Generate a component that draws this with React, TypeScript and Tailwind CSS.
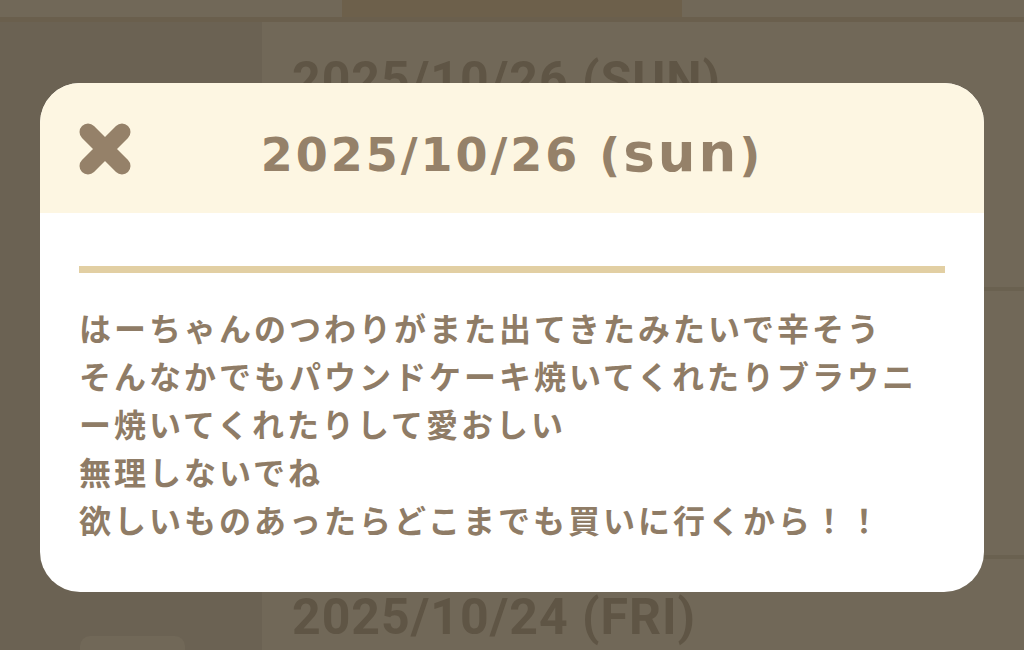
import { useState } from 'react'

const lines = [
  'はーちゃんのつわりがまた出てきたみたいで辛そう',
  'そんなかでもパウンドケーキ焼いてくれたりブラウニ',
  'ー焼いてくれたりして愛おしい',
  '無理しないでね',
  '欲しいものあったらどこまでも買いに行くから！！',
]

function CloseIcon() {
  return (
    <svg width="52" height="52" viewBox="0 0 52 52">
      <path d="M9 9 L43 43 M43 9 L9 43" stroke="#958169" strokeWidth="17" strokeLinecap="round" />
    </svg>
  )
}

export default function App() {
  const [open, setOpen] = useState(true)

  return (
    <div className="relative w-[1024px] h-[650px] overflow-hidden bg-[#716858]">
      {/* dimmed page behind the dialog */}
      <div className="flex h-[17px]">
        <div className="w-[342px] bg-[#716858]" />
        <div className="w-[340px] bg-[#6d604b]" />
        <div className="flex-1 bg-[#716858]" />
      </div>
      <div className="h-[5px] bg-[#6a5f4d]" />
      <div className="flex h-[628px]">
        <div className="w-[262px] bg-[#6b6253] pt-[614px] pl-[80px]">
          <div className="w-[105px] h-[30px] rounded-t-[10px] bg-[#716858]" />
        </div>
        <div className="flex-1 flex flex-col">
          <div className="h-[265px] pl-[30px] pt-[33px] font-['Roboto',sans-serif] font-bold text-[50px] tracking-[1px] text-[#5f5545] leading-none">
            2025/10/26 (SUN)
          </div>
          <div className="h-[268px] border-t-[4px] border-[#6a6150]" />
          <div className="flex-1 border-t-[4px] border-[#6a6150] pl-[30px] pt-[33px] font-['Roboto',sans-serif] font-bold text-[50px] tracking-[1px] text-[#5f5545] leading-none">
            2025/10/24 (FRI)
          </div>
        </div>
      </div>

      {open && (
        <div className="absolute left-[40px] top-[83px] w-[944px] h-[509px] rounded-[40px] overflow-hidden bg-white">
          <div className="relative h-[130px] bg-[#fdf6e2] flex items-center justify-center">
            <button onClick={() => setOpen(false)} className="absolute left-[39px] top-[40px]">
              <CloseIcon />
            </button>
            <h1 className="pt-[8px] font-['DejaVu_Sans',sans-serif] font-bold text-[46px] tracking-[3px] text-[#958169] leading-none">
              2025/10/26 (<span className="text-[53px]">sun</span>)
            </h1>
          </div>
          <div className="px-[39px]">
            <div className="mt-[53px] h-[7px] bg-[#e2cfa3]" />
            <div className="mt-[30px] font-['Noto_Sans_CJK_JP',sans-serif] font-bold text-[32px] leading-[48px] tracking-[3px] text-[#8f7c66]">
              {lines.map((l) => (
                <div key={l} className="whitespace-nowrap">{l}</div>
              ))}
            </div>
          </div>
        </div>
      )}
    </div>
  )
}
